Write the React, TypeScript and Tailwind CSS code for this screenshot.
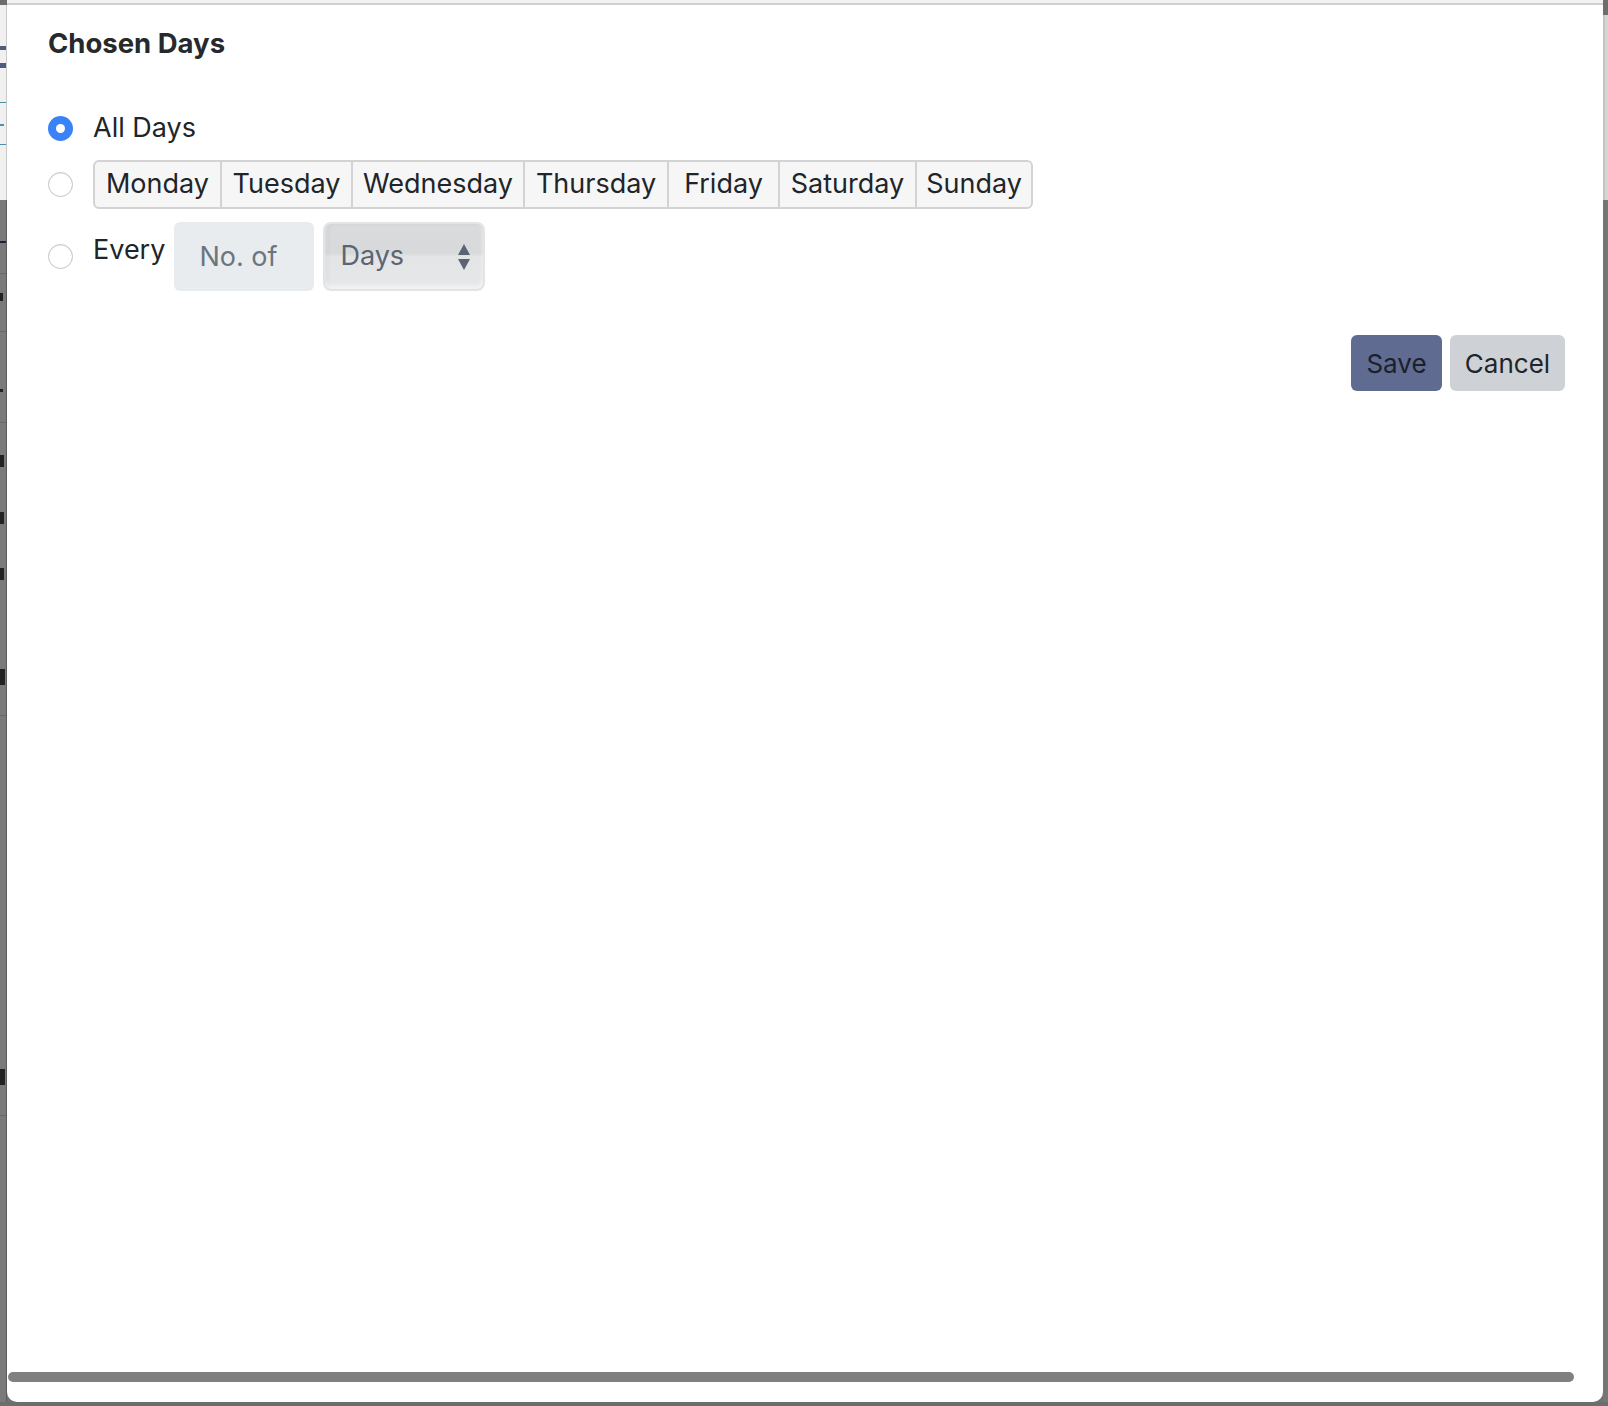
const days = [
  { label: "Monday", w: "w-[125px]" },
  { label: "Tuesday", w: "w-[131px]" },
  { label: "Wednesday", w: "w-[172px]" },
  { label: "Thursday", w: "w-[144px]" },
  { label: "Friday", w: "w-[111px]" },
  { label: "Saturday", w: "w-[137px]" },
  { label: "Sunday", w: "w-[116px]" },
];

const Radio = ({ checked }: { checked?: boolean }) =>
  checked ? (
    <span className="flex h-[25px] w-[25px] shrink-0 items-center justify-center rounded-full bg-[#3a82f7]">
      <span className="h-[9px] w-[9px] rounded-full bg-white" />
    </span>
  ) : (
    <span className="h-[25px] w-[25px] shrink-0 rounded-full border border-[#c4c4c4] bg-white shadow-[inset_0_1px_1px_rgba(0,0,0,0.08)]" />
  );

export default function App() {
  return (
    <div
      className="flex h-[1406px] w-[1608px] flex-col overflow-hidden bg-[#717171] text-[#212529]"
      style={{ fontFamily: "Inter, 'Liberation Sans', sans-serif" }}
    >
      {/* top edge of the page behind */}
      <div className="flex h-[5px] shrink-0">
        <div className="w-[7px] bg-[#6d6d6d]" />
        <div className="flex-1 border-b-2 border-[#cfd0d4] bg-[#f2f2f0]" />
        <div className="w-[5px] bg-[#6d6d6d]" />
      </div>

      <div className="flex flex-1">
        {/* left strip: page behind the dialog */}
        <div className="flex w-[7px] shrink-0 flex-col">
          <div className="flex h-[195px] flex-col border-r border-[#c9c9c9] bg-[#f2f0ef]">
            <div className="mt-[41px] h-[4px] bg-[#4f5a7e]" />
            <div className="mt-[13px] h-[5px] bg-[#4f5a7e]" />
            <div className="mt-[34px] h-[1px] bg-[#4b8fb3]" />
            <div className="mt-[21px] h-[2px] w-[4px] bg-[#4b8fb3]" />
            <div className="mt-[18px] h-[1px] bg-[#4b8fb3]" />
          </div>
          <div className="flex flex-1 flex-col border-r border-[#5d5d5d] bg-[#7a7a7a]">
            <div className="mt-[41px] h-[2px] bg-[#1d2140]" />
            <div className="mt-[30px] h-[1px] bg-[#6a6a6a]" />
            <div className="mt-[19px] h-[8px] w-[3px] bg-[#222]" />
            <div className="mt-[30px] h-[1px] bg-[#6a6a6a]" />
            <div className="mt-[57px] h-[3px] w-[3px] bg-[#222]" />
            <div className="mt-[30px] h-[1px] bg-[#6a6a6a]" />
            <div className="mt-[32px] h-[12px] w-[4px] bg-[#222]" />
            <div className="mt-[45px] h-[12px] w-[4px] bg-[#222]" />
            <div className="mt-[44px] h-[12px] w-[4px] bg-[#222]" />
            <div className="mt-[89px] h-[16px] w-[5px] bg-[#222]" />
            <div className="mt-[30px] h-[1px] bg-[#6a6a6a]" />
            <div className="mt-[353px] h-[16px] w-[5px] bg-[#222]" />
            <div className="mt-[30px] h-[1px] bg-[#6a6a6a]" />
          </div>
        </div>

        {/* dialog */}
        <div className="flex flex-1 flex-col rounded-b-[10px] bg-white">
          <div className="pl-[41px] pr-[38px] pt-[21px]">
            <h2 className="text-[27.5px] font-bold leading-[34px] text-[#26292d]">Chosen Days</h2>

            <div className="mt-[51px] flex flex-col">
              <label className="flex h-[34px] items-center gap-[20px]">
                <Radio checked />
                <span className="text-[27px] leading-[34px]">All Days</span>
              </label>

              <div className="mt-[15px] flex h-[49px] items-center gap-[20px]">
                <Radio />
                <div className="flex h-[49px] overflow-hidden rounded-[6px] border-2 border-[#d3d3d3] bg-[#f6f6f6]">
                  {days.map((d, i) => (
                    <button
                      key={d.label}
                      className={`${d.w} flex items-center justify-center text-[27px] ${
                        i > 0 ? "border-l-2 border-[#d3d3d3]" : ""
                      }`}
                    >
                      {d.label}
                    </button>
                  ))}
                </div>
              </div>

              <div className="mt-[13px] flex h-[69px] items-center">
                <div className="flex items-center gap-[20px]">
                  <Radio />
                  <span className="-mt-[12px] text-[27px]">Every</span>
                </div>
                <input
                  placeholder="No. of"
                  className="ml-[9px] h-[69px] w-[140px] rounded-[6px] bg-[#e9ecef] pl-[25px] text-[27px] outline-none placeholder:text-[#6c757d]"
                />
                <div className="ml-[9px] flex h-[69px] w-[162px] items-center justify-between rounded-[8px] border-2 border-[#e4e4e4] bg-[linear-gradient(#dadbdc_0%,#d8d9da_45%,#e3e4e5_50%,#e7e8e9_100%)] pl-[15px] pr-[12px] shadow-[inset_0_-3px_4px_rgba(255,255,255,0.6),inset_3px_0_4px_rgba(0,0,0,0.05)]">
                  <span className="text-[27px] text-[#5b6473]">Days</span>
                  <svg width="14" height="28" viewBox="0 0 14 28">
                    <path d="M7 1 L13 12 L1 12 Z" fill="#5b6473" />
                    <path d="M7 27 L13 16 L1 16 Z" fill="#5b6473" />
                  </svg>
                </div>
              </div>
            </div>

            <div className="mt-[44px] flex justify-end gap-[8px]">
              <button className="h-[56px] w-[91px] rounded-[6px] bg-[#5f6b91] text-[26px] text-[#1c202b]">Save</button>
              <button className="h-[56px] w-[115px] rounded-[6px] bg-[#ced2d6] text-[26px] text-[#212529]">Cancel</button>
            </div>
          </div>

          {/* horizontal scrollbar */}
          <div className="mt-auto pb-[20px] pl-[1px]">
            <div className="h-[10px] w-[1566px] rounded-full bg-[#808080]" />
          </div>
        </div>

        {/* right strip */}
        <div className="flex w-[5px] shrink-0 flex-col">
          <div className="h-[10px] bg-[#6d6d6d]" />
          <div className="h-[185px] border-l-2 border-[#c4c4c4] bg-[#d6d5d6]" />
          <div className="flex-1 bg-[#767676]" />
        </div>
      </div>

      <div className="h-[4px] shrink-0 bg-[#6d6d6d]" />
    </div>
  );
}
